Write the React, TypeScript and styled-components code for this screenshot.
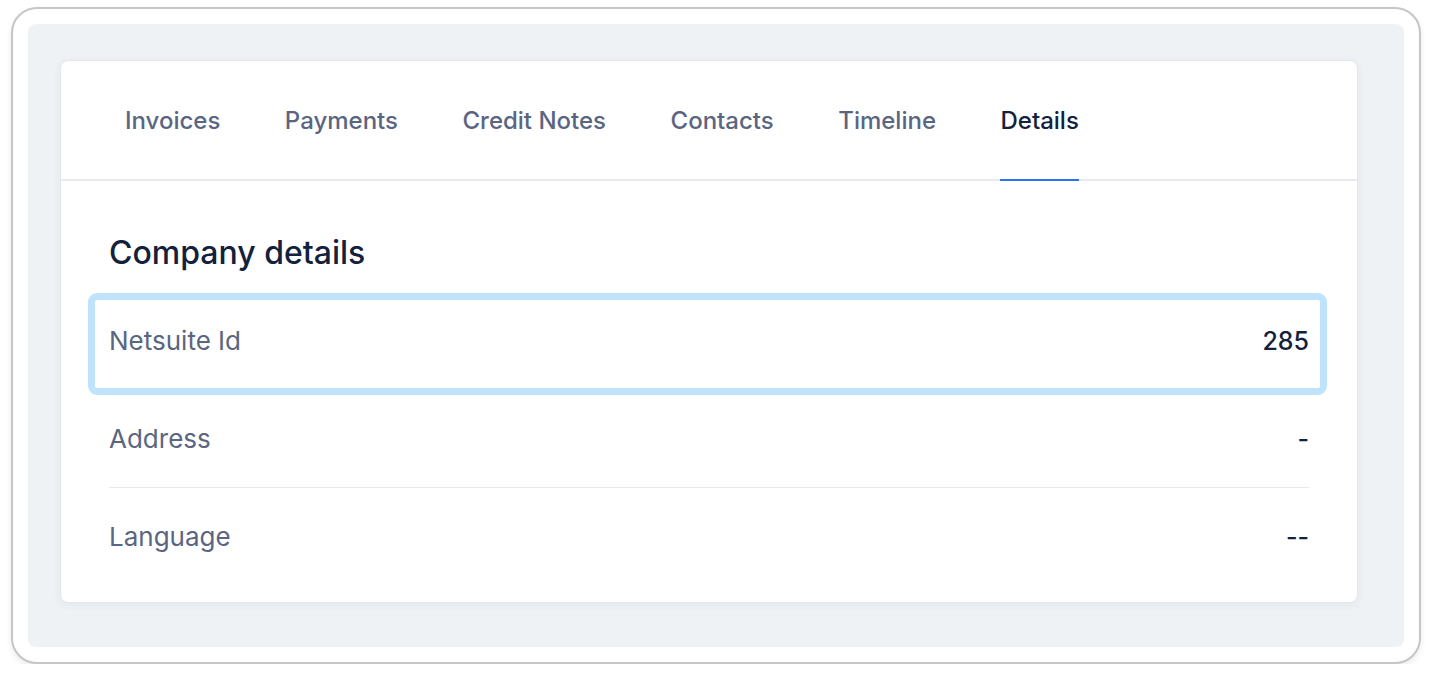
import styled, { createGlobalStyle } from "styled-components";

const GlobalStyle = createGlobalStyle`
    html, body {
        margin: 0;
        padding: 0;
        background: #ffffff;
        font-family: Inter, "Noto Sans", sans-serif;
    }
`;

const Frame = styled.div`
    box-sizing: border-box;
    margin: 7px 11px 0 11px;
    width: 1410px;
    height: 657px;
    border: 2px solid #c6c6c6;
    border-radius: 26px;
    background: #ffffff;
    padding: 15px;
    box-shadow: 0 3px 6px rgba(0, 0, 0, 0.08);
`;

const Panel = styled.div`
    box-sizing: border-box;
    height: 100%;
    background: #eff2f5;
    border-radius: 8px;
    padding: 36px 46px 46px 32px;
`;

const Card = styled.div`
    background: #ffffff;
    border-radius: 8px;
    border: 1px solid #e3e6eb;
    box-shadow: 0 2px 8px rgba(30, 40, 60, 0.06);
`;

const TabBar = styled.nav`
    display: flex;
    gap: 64.5px;
    padding-left: 64px;
    height: 118px;
    border-bottom: 2px solid #e8eaef;
`;

const Tab = styled.a<{ $active?: boolean }>`
    display: flex;
    align-items: center;
    margin-bottom: -2px;
    font-size: 24px;
    font-weight: 500;
    color: ${(p) => (p.$active ? "#14213d" : "#5a6681")};
    border-bottom: 2px solid ${(p) => (p.$active ? "#2b72ee" : "transparent")};
    cursor: pointer;
`;

const Body = styled.div`
    padding: 52px 48px 16px 48px;
`;

const Heading = styled.h2`
    margin: 0 0 19px 0;
    font-size: 32px;
    font-weight: 500;
    line-height: 40px;
    color: #14213d;
`;

const Row = styled.div<{ $focused?: boolean; $divider?: boolean }>`
    position: relative;
    display: flex;
    align-items: center;
    justify-content: space-between;
    height: 97px;
    border-bottom: 1px solid ${(p) => (p.$divider ? "#e8eaef" : "transparent")};

    ${(p) =>
        p.$focused &&
        `
        &::after {
            content: "";
            position: absolute;
            inset: 1px -18px -6px -21px;
            border: 7px solid #bfe3fb;
            border-radius: 9px;
            pointer-events: none;
        }
    `}
`;

const Label = styled.span`
    font-size: 26px;
    color: #5a6681;
`;

const Value = styled.span`
    font-size: 25px;
    font-weight: 500;
    color: #14213d;
`;

const tabs = ["Invoices", "Payments", "Credit Notes", "Contacts", "Timeline", "Details"];

const rows = [
    { label: "Netsuite Id", value: "285" },
    { label: "Address", value: "-" },
    { label: "Language", value: "--" },
];

const App = () => {
    return (
        <>
            <GlobalStyle />
            <Frame>
                <Panel>
                    <Card>
                        <TabBar>
                            {tabs.map((t) => (
                                <Tab key={t} $active={t === "Details"}>
                                    {t}
                                </Tab>
                            ))}
                        </TabBar>
                        <Body>
                            <Heading>Company details</Heading>
                            {rows.map((r, i) => (
                                <Row key={r.label} $focused={i === 0} $divider={i === 1}>
                                    <Label>{r.label}</Label>
                                    <Value>{r.value}</Value>
                                </Row>
                            ))}
                        </Body>
                    </Card>
                </Panel>
            </Frame>
        </>
    );
};

export default App;
